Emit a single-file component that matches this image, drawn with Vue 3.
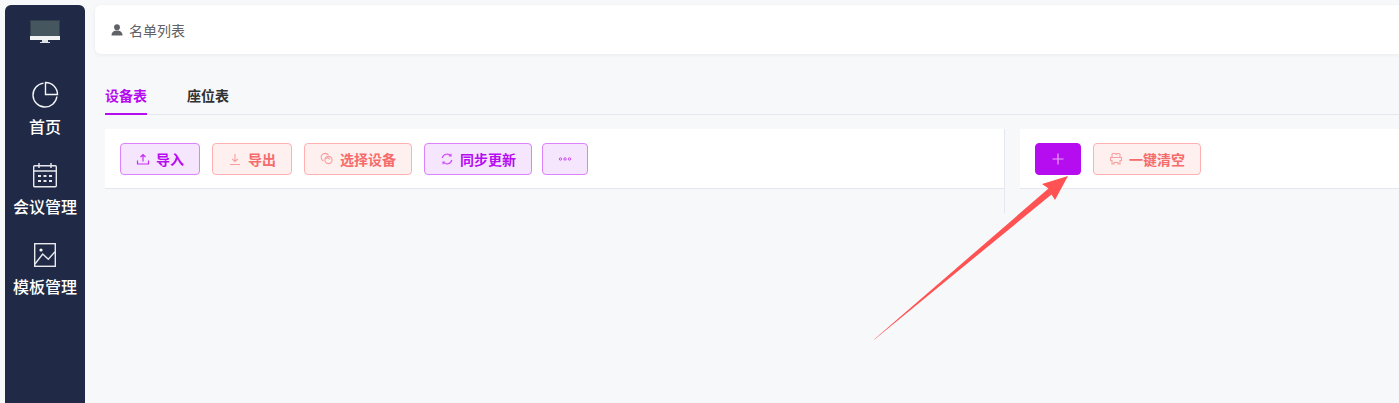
<script setup>
const navItems = [
  { label: '首页', icon: 'pie' },
  { label: '会议管理', icon: 'calendar' },
  { label: '模板管理', icon: 'picture' },
]
</script>

<template>
  <div class="page">
    <aside class="sidebar">
      <svg class="logo" width="30" height="23" viewBox="0 0 30 23">
        <rect x="0" y="0" width="30" height="16" fill="#33414f" />
        <rect x="1" y="1" width="28" height="15" fill="#46565f" />
        <rect x="0" y="16" width="30" height="4" fill="#f2f3f3" />
        <rect x="12" y="20" width="6" height="2" fill="#dfe2e5" />
        <rect x="10" y="22" width="10" height="1" fill="#dfe2e5" />
      </svg>
      <nav class="nav">
        <a v-for="item in navItems" :key="item.label" class="nav-item">
          <span class="nav-icon">
            <svg v-if="item.icon === 'pie'" width="28" height="28" viewBox="0 0 28 28" fill="none" stroke="#f4f5f7" stroke-width="1.400">
              <path d="M12.500 2.100A12 12 0 1 0 25.900 15.500" />
              <path d="M14.500 13.500V1.500A12 12 0 0 1 26.500 13.500Z" />
            </svg>
            <svg v-else-if="item.icon === 'calendar'" width="26" height="26" viewBox="0 0 26 26" fill="none" stroke="#e8eaee" stroke-width="1.400">
              <rect x="1.700" y="3.700" width="22.600" height="21" rx="1" />
              <path d="M1.700 9h22.600M7 1v5M19 1v5" />
              <path d="M6 14h3M11.500 14h3M17 14h3M6 19h3M11.500 19h3M17 19h3" stroke-width="1.800" />
            </svg>
            <svg v-else width="24" height="24" viewBox="0 0 24 24" fill="none" stroke="#e8eaee" stroke-width="1.400">
              <rect x="1.700" y="0.700" width="20.600" height="22.600" />
              <circle cx="8" cy="7" r="1.600" fill="#fff" stroke="none" />
              <path d="M2 21l7.700-10 5.600 5.300L22 8.700" />
            </svg>
          </span>
          <span>{{ item.label }}</span>
        </a>
      </nav>
    </aside>

    <main class="main">
      <header class="crumb">
        <svg width="12" height="12" viewBox="0 0 12 12" fill="#5f6266">
          <circle cx="6" cy="3.200" r="2.900" />
          <path d="M0.500 11.500c0-3.500 2.200-5 5.500-5s5.500 1.500 5.500 5Z" />
        </svg>
        <span>名单列表</span>
      </header>

      <div class="tabs">
        <a class="tab active">设备表</a>
        <a class="tab">座位表</a>
      </div>

      <div class="columns">
        <section class="col-left">
          <div class="toolbar">
            <button class="btn purple w80">
              <svg width="14" height="14" viewBox="0 0 14 14" fill="none" stroke="#c52ef3" stroke-width="1.200">
                <path d="M1.500 8.500v3.500h11V8.500M7 9.500V2.500M4.500 5L7 2.500 9.500 5" />
              </svg>
              导入
            </button>
            <button class="btn red w80">
              <svg width="14" height="14" viewBox="0 0 14 14" fill="none" stroke="#fa9e9e" stroke-width="1.100">
                <path d="M2 12.500h10M7 2v7.500M4 6.800L7 9.500 10 6.800" />
              </svg>
              导出
            </button>
            <button class="btn red w108">
              <svg width="14" height="14" viewBox="0 0 14 14" fill="none" stroke="#fa9e9e" stroke-width="1.100">
                <path d="M8.500 3.200A4 4 0 1 0 3.500 9" />
                <circle cx="8.500" cy="8" r="3.600" />
                <path d="M5 6.500c2-1 4-.5 5 1" />
              </svg>
              选择设备
            </button>
            <button class="btn purple w108">
              <svg width="14" height="14" viewBox="0 0 14 14" fill="none" stroke="#d24ff6" stroke-width="1.200">
                <path d="M2.200 6A5 5 0 0 1 11 4M11.800 8A5 5 0 0 1 3 10M11 1.800V4H8.800M3 12.200V10h2.200" />
              </svg>
              同步更新
            </button>
            <button class="btn purple w46 more">
              <svg width="14" height="14" viewBox="0 0 14 14" fill="none" stroke="#c63af3" stroke-width="0.900">
                <circle cx="2.500" cy="7" r="1.200" />
                <circle cx="7" cy="7" r="1.200" />
                <circle cx="11.500" cy="7" r="1.200" />
              </svg>
            </button>
          </div>
        </section>
        <section class="col-right">
          <div class="toolbar">
            <button class="btn solid w46">
              <svg width="14" height="14" viewBox="0 0 14 14" fill="none" stroke="#e6a6f5" stroke-width="1.200">
                <path d="M7 1.500v11M1.500 7h11" />
              </svg>
            </button>
            <button class="btn red w108">
              <svg width="14" height="14" viewBox="0 0 14 14" fill="none" stroke="#fa9e9e" stroke-width="1.100">
                <path d="M3 5.500V2.500Q3 1.500 4 1.500H6.500L7.500 2.500 8.500 1.500H10Q11 1.500 11 2.500V5.500M1.500 5.500H12.500V8.500H11V12H9V10.500H5V12H3V8.500H1.500Z" />
              </svg>
              一键清空
            </button>
          </div>
        </section>
      </div>
    </main>

    <svg class="arrow" width="210" height="175" viewBox="864 170 210 175">
      <path d="M874 339.500L1048.500 188.500L1042 184L1068 176L1055 200L1051.500 194.500L874.500 339.500Z" fill="#ff5353" />
    </svg>
  </div>
</template>

<style>
html, body {
  margin: 0;
  background: #f7f8fa;
}
</style>

<style scoped>
.page {
  position: relative;
  display: flex;
  width: 1399px;
  height: 403px;
  overflow: hidden;
  background: #f7f8fa;
  box-sizing: border-box;
  padding: 5px 0 0 5px;
  font-family: Inter, "Noto Sans CJK SC", sans-serif;
}
.sidebar {
  flex: 0 0 80px;
  display: flex;
  flex-direction: column;
  align-items: center;
  background: #202a46;
  border-radius: 6px 6px 0 0;
  padding-top: 15px;
}
.logo {
  display: block;
}
.nav {
  display: flex;
  flex-direction: column;
  margin-top: 37px;
}
.nav-item {
  display: flex;
  flex-direction: column;
  align-items: center;
  height: 80px;
  color: #fff;
  font-size: 16px;
  font-weight: 500;
  line-height: 24px;
  gap: 5px;
}
.nav-icon {
  display: flex;
  align-items: center;
  justify-content: center;
  height: 30px;
}
.main {
  flex: 1;
  margin-left: 10px;
  min-width: 0;
}
.crumb {
  display: flex;
  align-items: center;
  gap: 6px;
  height: 49px;
  box-sizing: border-box;
  padding-left: 16px;
  background: #fff;
  border-radius: 6px 0 0 6px;
  box-shadow: 0 1px 4px rgba(0, 0, 0, 0.06);
  color: #606266;
  font-size: 14px;
}
.tabs {
  display: flex;
  gap: 40px;
  margin: 30px 0 0 10px;
  height: 30px;
  border-bottom: 1px solid #e5e6f0;
}
.tab {
  height: 31px;
  box-sizing: border-box;
  color: #303133;
  font-size: 14px;
  font-weight: 700;
  line-height: 24px;
}
.tab.active {
  color: #b60cf0;
  border-bottom: 2px solid #b60cf0;
}
.columns {
  display: flex;
  margin: 14px 0 0 10px;
}
.col-left {
  flex: 0 0 900px;
  height: 84px;
  box-sizing: border-box;
  border-right: 1px solid #e5e6f0;
}
.col-right {
  flex: 1;
  margin-left: 15px;
}
.toolbar {
  display: flex;
  align-items: center;
  gap: 12px;
  height: 60px;
  box-sizing: border-box;
  padding: 0 15px;
  background: #fff;
  border-bottom: 1px solid #e5e6f0;
}
.btn {
  display: flex;
  align-items: center;
  justify-content: center;
  gap: 6px;
  height: 32px;
  padding: 0;
  box-sizing: border-box;
  border-radius: 4px;
  border: 1px solid;
  font-family: inherit;
  font-size: 14px;
  font-weight: 600;
}
.btn.more {
  margin-left: -2px;
}
.purple {
  background: #f6e6fd;
  border-color: #dc82fb;
  color: #b60cf0;
}
.red {
  background: #fff0f0;
  border-color: #ffb0b0;
  color: #f56c6c;
}
.solid {
  background: #b60cf0;
  border-color: #b60cf0;
}
.w80 { width: 80px; }
.w108 { width: 108px; }
.w46 { width: 46px; }
.arrow {
  position: absolute;
  left: 864px;
  top: 170px;
}
</style>
